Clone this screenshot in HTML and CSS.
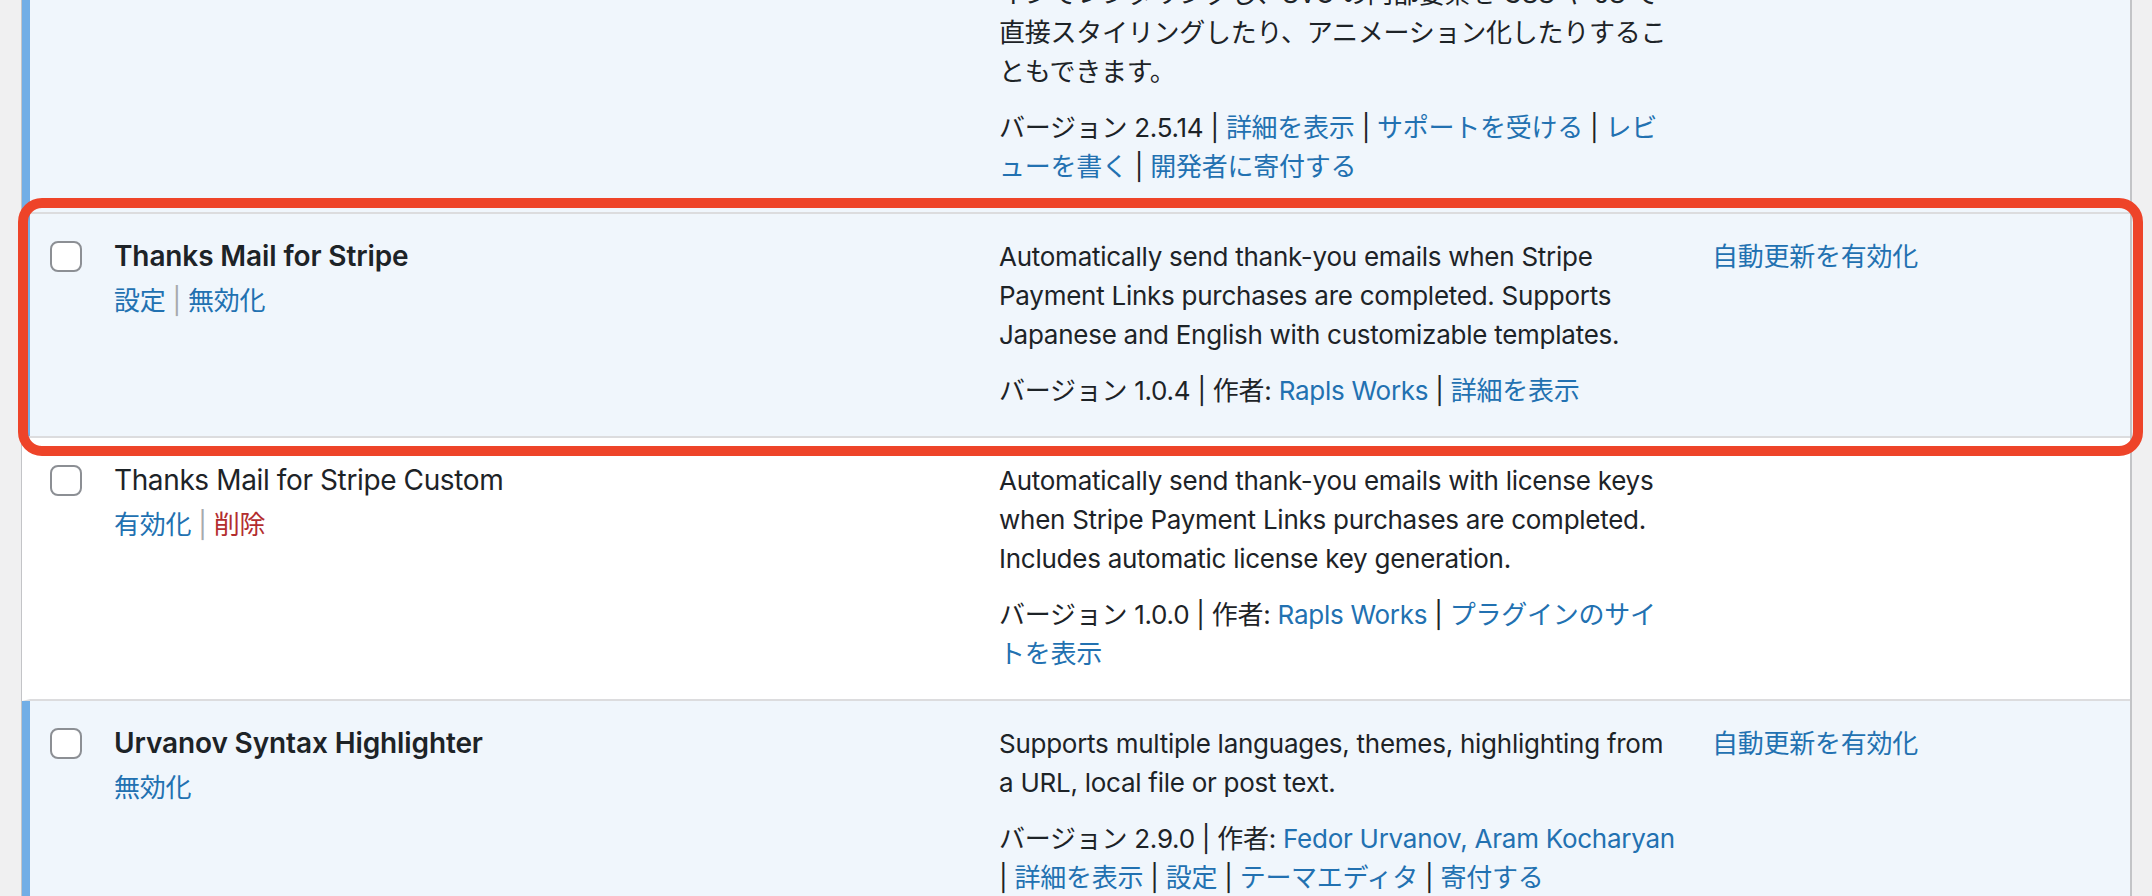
FILE: index.html
```html
<!DOCTYPE html>
<html lang="ja">
<head>
<meta charset="utf-8">
<title>プラグイン</title>
<link rel="stylesheet" href="styles.css">
</head>
<body>
<table class="plugins">
  <colgroup>
    <col class="col-check">
    <col class="col-title">
    <col class="col-desc">
    <col class="col-auto">
  </colgroup>
  <tbody>
    <tr class="active">
      <th class="check-column"><input type="checkbox" class="cb"></th>
      <td class="plugin-title">
        <strong>SVG Support</strong>
        <div class="row-actions"><a href="#">設定</a> | <a href="#">無効化</a></div>
      </td>
      <td class="column-description">
        <p class="plugin-description">SVG ファイルを安全にアップロードできるだけでなく、<br>SVG ファイルをインラ<br>インでレンダリングし、SVG の内部要素を CSS や JS で<br>直接スタイリングしたり、アニメーション化したりすることもできます。</p>
        <div class="second">バージョン 2.5.14 | <a href="#">詳細を表示</a> | <a href="#">サポートを受ける</a> | <a href="#">レビューを書く</a> | <a href="#">開発者に寄付する</a></div>
      </td>
      <td class="column-auto-updates"><a href="#">自動更新を有効化</a></td>
    </tr>
    <tr class="active">
      <th class="check-column"><input type="checkbox" class="cb"></th>
      <td class="plugin-title">
        <strong>Thanks Mail for Stripe</strong>
        <div class="row-actions"><a href="#">設定</a> | <a href="#">無効化</a></div>
      </td>
      <td class="column-description">
        <p class="plugin-description">Automatically send thank-you emails when Stripe Payment Links purchases are completed. Supports Japanese and English with customizable templates.</p>
        <div class="second">バージョン 1.0.4 | 作者: <a href="#">Rapls Works</a> | <a href="#">詳細を表示</a></div>
      </td>
      <td class="column-auto-updates"><a href="#">自動更新を有効化</a></td>
    </tr>
    <tr class="inactive">
      <th class="check-column"><input type="checkbox" class="cb"></th>
      <td class="plugin-title">
        <strong>Thanks Mail for Stripe Custom</strong>
        <div class="row-actions"><a href="#">有効化</a> | <a href="#" class="delete">削除</a></div>
      </td>
      <td class="column-description">
        <p class="plugin-description">Automatically send thank-you emails with license keys when Stripe Payment Links purchases are completed. Includes automatic license key generation.</p>
        <div class="second">バージョン 1.0.0 | 作者: <a href="#">Rapls Works</a> | <a href="#">プラグインのサイトを表示</a></div>
      </td>
      <td class="column-auto-updates"></td>
    </tr>
    <tr class="active">
      <th class="check-column"><input type="checkbox" class="cb"></th>
      <td class="plugin-title">
        <strong>Urvanov Syntax Highlighter</strong>
        <div class="row-actions"><a href="#">無効化</a></div>
      </td>
      <td class="column-description">
        <p class="plugin-description">Supports multiple languages, themes, highlighting from a URL, local file or post text.</p>
        <div class="second">バージョン 2.9.0 | 作者: <a href="#">Fedor Urvanov, Aram Kocharyan</a> | <a href="#">詳細を表示</a> | <a href="#">設定</a> | <a href="#">テーマエディタ</a> | <a href="#">寄付する</a></div>
      </td>
      <td class="column-auto-updates"><a href="#">自動更新を有効化</a></td>
    </tr>
  </tbody>
</table>
<div class="highlight-frame" aria-hidden="true"></div>
</body>
</html>
```

FILE: styles.css
```css
html, body {
  margin: 0;
  padding: 0;
}
body {
  position: relative;
  background: #f0f0f1;
  color: #1d2327;
  font-family: Inter, "Noto Sans CJK JP", sans-serif;
  font-size: 26px;
  line-height: 39px;
  letter-spacing: -0.26px;
  overflow: hidden;
  height: 896px;
}
a {
  color: #2271b1;
  text-decoration: none;
}
.plugins {
  margin: -127px 0 0 21px;
  width: 2111px;
  table-layout: fixed;
  border-collapse: separate;
  border-spacing: 0;
  border-left: 1px solid #c3c4c7;
  border-right: 2px solid #c3c4c7;
  background: #fff;
}
.col-check { width: 72px; }
.col-title { width: 885px; }
.col-desc { width: 713px; }
.col-auto { width: auto; }

.plugins th,
.plugins td {
  vertical-align: top;
  text-align: left;
  font-weight: 400;
  border-bottom: 2px solid #dcdcde;
}
.plugins tr.active th,
.plugins tr.active td {
  background: #f0f6fc;
}
.plugins tr.inactive th,
.plugins tr.inactive td {
  background: #fff;
}
.check-column {
  padding: 27px 0 0 20px;
  border-left: 8px solid transparent;
}
.plugins tr.active .check-column {
  border-left-color: #72aee6;
}
.cb {
  -webkit-appearance: none;
  appearance: none;
  display: block;
  margin: 0;
  width: 32px;
  height: 31px;
  box-sizing: border-box;
  border: 2px solid #8c8f94;
  border-radius: 8px;
  background: #fff;
}
.plugin-title {
  padding: 23px 20px 26px 20px;
}
.plugin-title strong {
  display: block;
  font-size: 28px;
  line-height: 39px;
  font-weight: 600;
  letter-spacing: -0.12px;
  margin-bottom: 5px;
  white-space: nowrap;
}
.plugins tr.inactive .plugin-title strong {
  font-weight: 400;
  letter-spacing: -0.38px;
}
.row-actions {
  color: #a7aaad;
}
.row-actions .delete {
  color: #b32d2e;
}
.column-description {
  padding: 23px 17px 26px 20px;
}
.plugin-description {
  margin: 0 0 17px;
}
.second {
  margin: 0;
}
.column-auto-updates {
  padding: 23px 20px 26px 20px;
}
.highlight-frame {
  position: absolute;
  left: 18px;
  top: 198px;
  width: 2125px;
  height: 258px;
  box-sizing: border-box;
  border: 10px solid #ee4429;
  border-radius: 24px;
  pointer-events: none;
}
```
